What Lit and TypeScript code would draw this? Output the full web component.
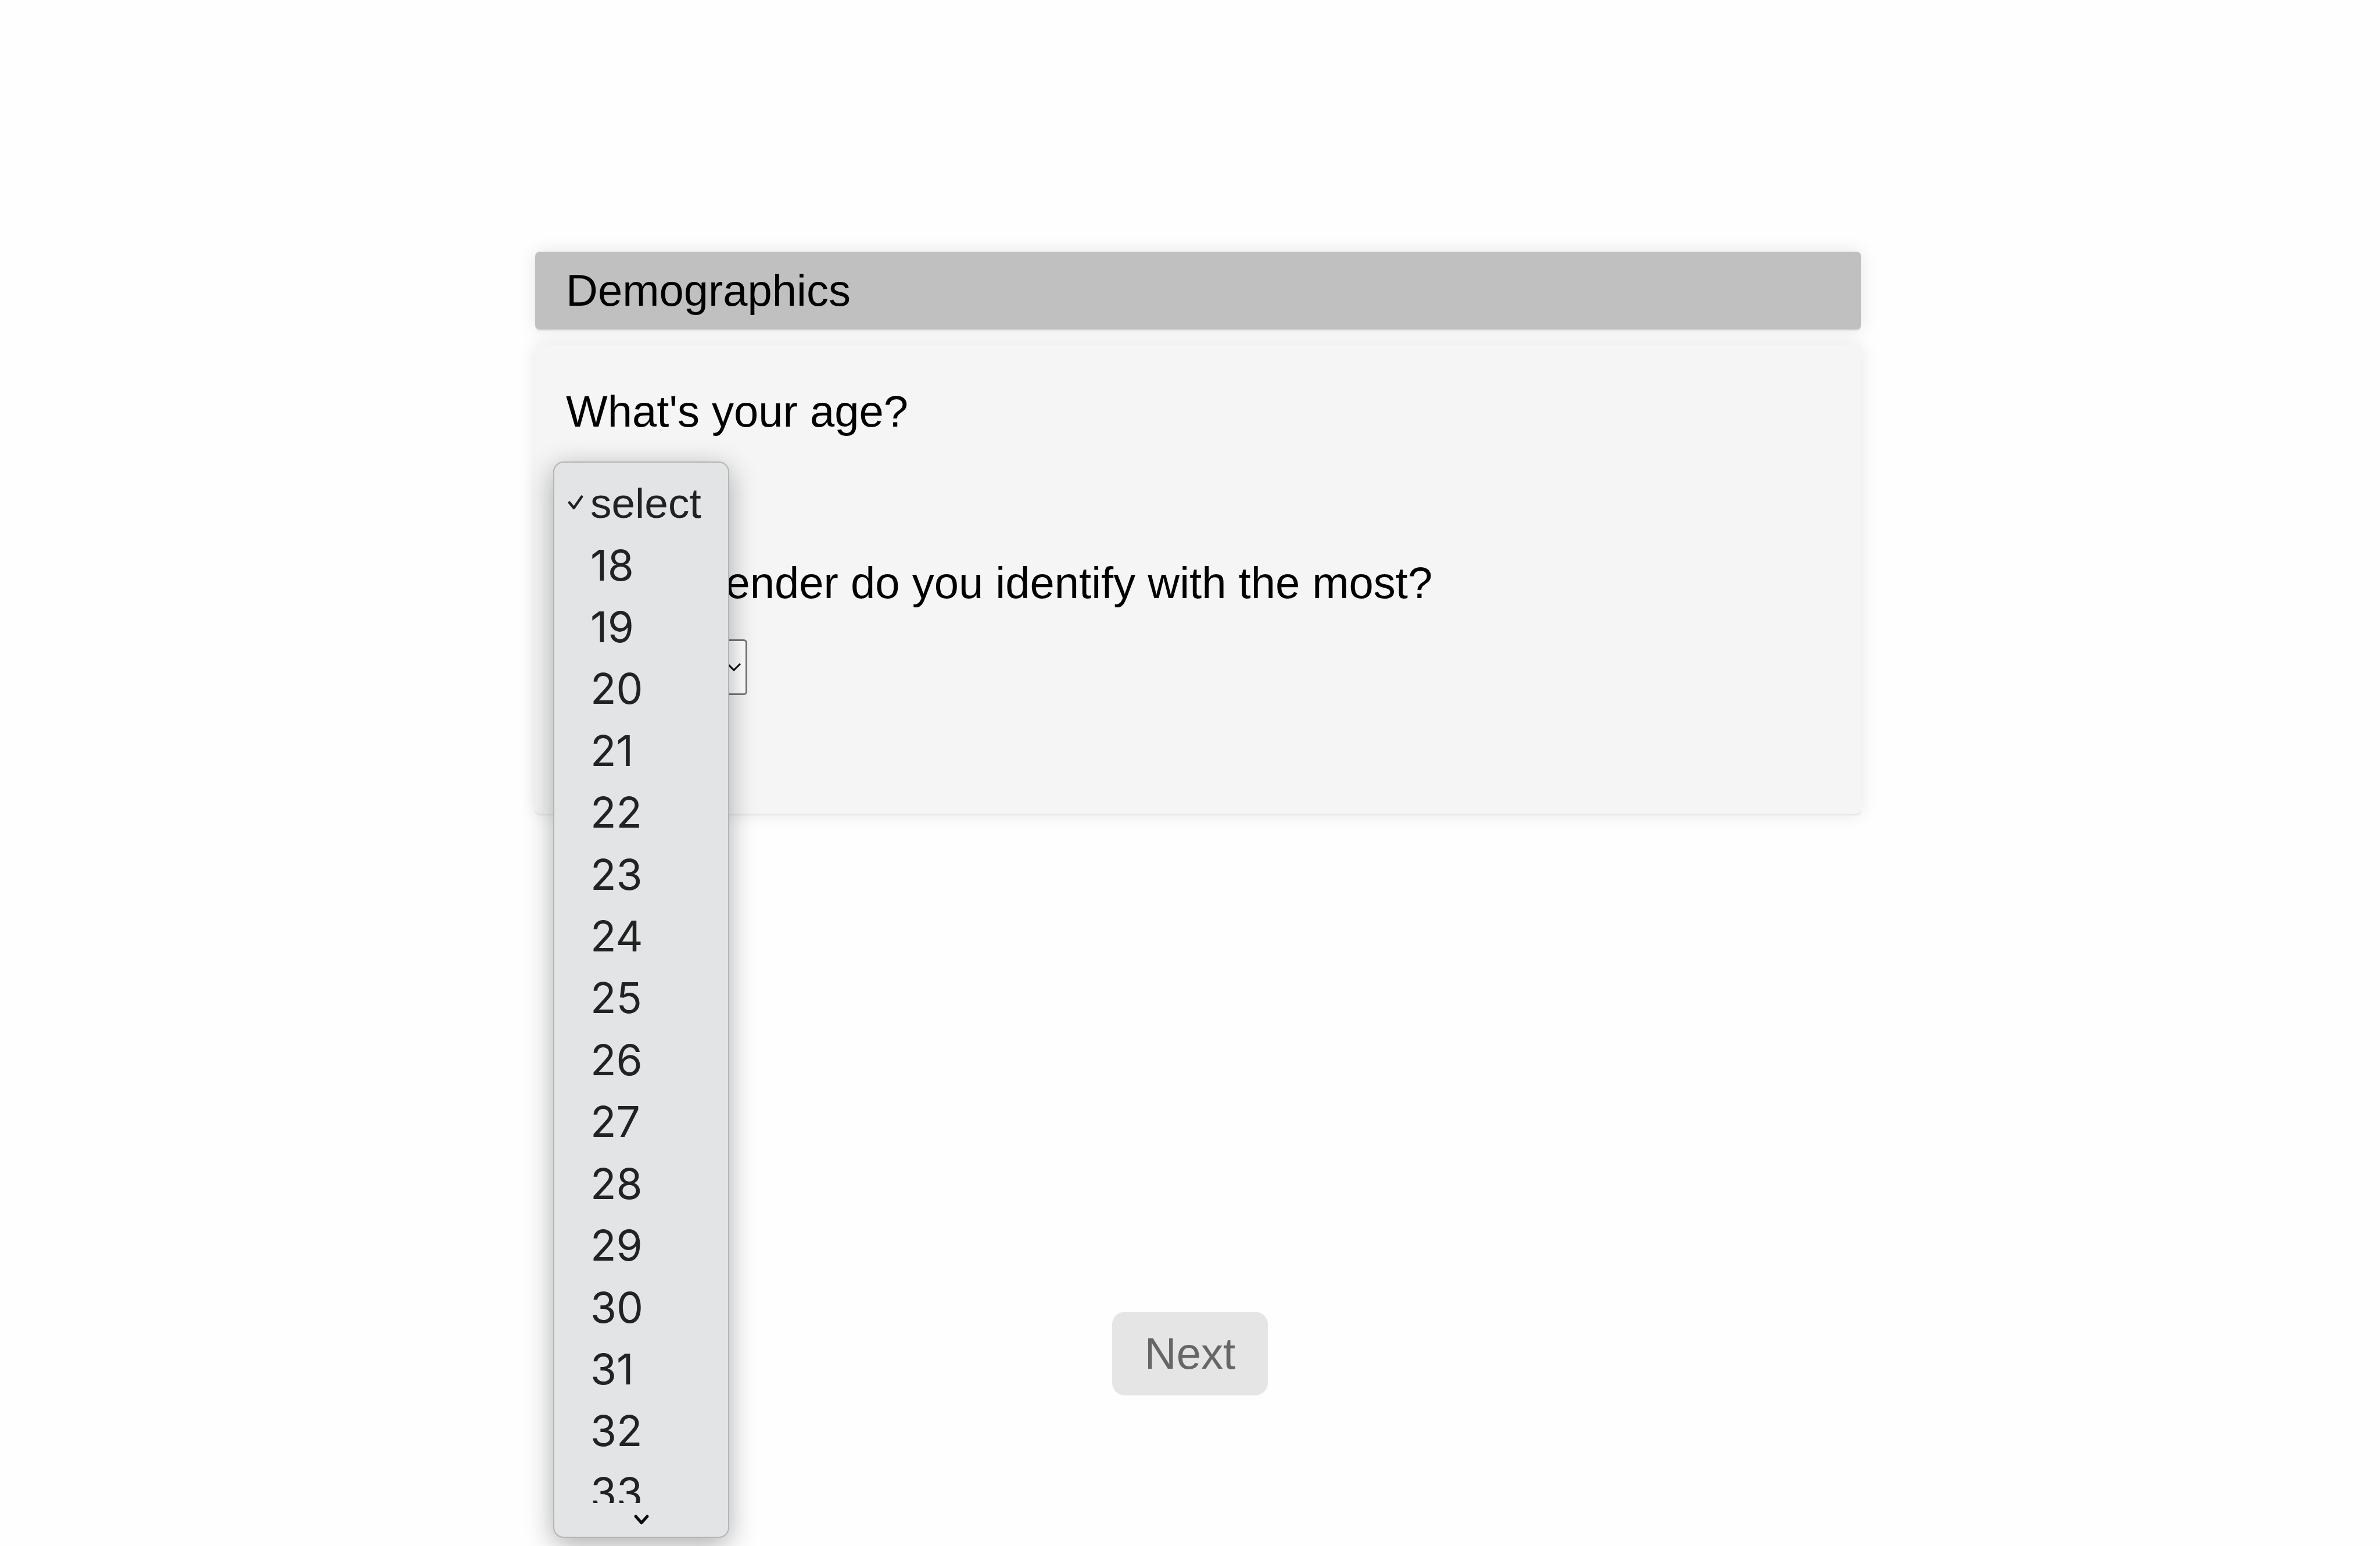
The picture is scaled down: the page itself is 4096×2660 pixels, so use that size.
import { LitElement, html, css, svg } from "lit";
import { customElement, property, state } from "lit/decorators.js";
import { classMap } from "lit/directives/class-map.js";

const PLACEHOLDER = "select";
const AGES = Array.from({ length: 16 }, (_, i) => String(18 + i));
const GENDERS = ["Woman", "Man", "Non-binary", "Other"];

@customElement("age-menu")
export class AgeMenu extends LitElement {
  @property() value = PLACEHOLDER;

  static styles = css`
    :host {
      display: block;
      box-sizing: border-box;
      width: 303px;
      padding: 17px 0 0;
      border: 2px solid #b4b5b7;
      border-radius: 18px;
      background: #e3e4e6;
      box-shadow: 0 12px 48px rgba(0, 0, 0, 0.32);
      color: #222;
      font-family: Inter, sans-serif;
      font-size: 73px;
      font-weight: 400;
    }
    .viewport {
      height: 1773px;
      overflow: hidden;
    }
    .list {
      display: grid;
      grid-auto-rows: 1fr;
      height: 1809px;
      margin: 0;
      padding: 0;
      list-style: none;
    }
    .option {
      display: grid;
      grid-template-columns: 62px 1fr;
      align-items: center;
      line-height: 88px;
    }
    .mark {
      display: block;
      width: 28px;
      height: 28px;
      margin-left: 23px;
    }
    .label {
      grid-column: 2;
    }
    .label.placeholder {
      font-family: "Liberation Sans", Arial, sans-serif;
    }
    .more {
      display: flex;
      justify-content: center;
      padding: 18px 0 20px;
    }
    .more svg {
      display: block;
      width: 28px;
      height: 20px;
    }
    .stroke {
      fill: none;
      stroke: currentColor;
      stroke-width: 4.5;
      stroke-linecap: round;
      stroke-linejoin: round;
    }
    .stroke.heavy {
      stroke: #0c0c0c;
      stroke-width: 5;
    }
  `;

  render() {
    const check = html`<svg class="mark" viewBox="0 0 28 28" aria-hidden="true">
      ${svg`<path class="stroke" d="M3 12.700 L10.700 22 L24 2.700" />`}
    </svg>`;
    return html`
      <div class="viewport">
        <ul class="list" role="listbox" aria-label="Age">
          ${[PLACEHOLDER, ...AGES].map(
            (age) => html`<li class="option" role="option" aria-selected=${age === this.value}>
              ${age === this.value ? check : ""}
              <span class=${classMap({ label: true, placeholder: age === PLACEHOLDER })}>${age}</span>
            </li>`
          )}
        </ul>
      </div>
      <div class="more">
        <svg viewBox="0 0 28 20" aria-hidden="true">
          <path class="stroke heavy" d="M4 5 L14 16 L24 5" />
        </svg>
      </div>
    `;
  }
}

@customElement("app-root")
export class AppRoot extends LitElement {
  @state() private age = PLACEHOLDER;

  static styles = css`
    :host {
      display: block;
      box-sizing: border-box;
      min-height: 100vh;
      padding: 433px 0 0;
      overflow: hidden;
      background: #fefefe;
      color: #000;
      font-family: "Liberation Sans", Arial, sans-serif;
      font-size: 76px;
      line-height: 84px;
    }
    .survey {
      display: flex;
      flex-direction: column;
      align-items: center;
    }
    .form {
      display: flex;
      flex-direction: column;
      gap: 26px;
      box-sizing: border-box;
      width: 100%;
      max-width: 2310px;
      padding-left: 28px;
    }
    .title,
    .panel {
      margin: 0;
      border-radius: 8px;
      box-shadow: 0 3px 0 #e8e8e8, 0 0 30px rgba(0, 0, 0, 0.1);
    }
    .title {
      padding: 25px 53px;
      background: #c0c0c0;
      font-size: inherit;
      font-weight: 400;
    }
    .panel {
      display: flex;
      flex-direction: column;
      gap: 60px;
      padding: 73px 31px 204px;
      background: #f5f5f5;
    }
    .question {
      display: flex;
      flex-direction: column;
      align-items: flex-start;
      gap: 55px;
    }
    .prompt {
      padding-left: 22px;
    }
    .field {
      display: grid;
      position: relative;
      width: 334px;
    }
    .field.narrow {
      width: 290px;
    }
    .select {
      grid-area: 1 / 1;
      appearance: none;
      box-sizing: border-box;
      width: 100%;
      height: 96px;
      padding: 0 48px 0 21px;
      border: 3px solid #767676;
      border-radius: 6px;
      background: #fff;
      color: #000;
      font: inherit;
    }
    .arrow {
      grid-area: 1 / 1;
      place-self: center end;
      width: 26px;
      height: 16px;
      margin-right: 10px;
      fill: none;
      stroke: #000;
      stroke-width: 3;
      pointer-events: none;
    }
    .menu {
      position: absolute;
      z-index: 1;
      top: -11px;
      left: 0;
    }
    .next {
      margin-top: 857px;
      padding: 30px 56px;
      border: 0;
      border-radius: 22px;
      background: #e5e5e5;
      color: #666;
      font: inherit;
    }
  `;

  private arrow() {
    return html`<svg class="arrow" viewBox="0 0 26 16" aria-hidden="true">
      <path d="M2 2 L13 13 L24 2" />
    </svg>`;
  }

  render() {
    return html`
      <main class="survey">
        <form class="form">
          <h1 class="title">Demographics</h1>
          <div class="panel">
            <div class="question">
              <label class="prompt" for="age">What's your age?</label>
              <div class="field narrow">
                <select class="select" id="age">
                  <option>${PLACEHOLDER}</option>
                  ${AGES.map((a) => html`<option>${a}</option>`)}
                </select>
                ${this.arrow()}
                <age-menu class="menu" .value=${this.age}></age-menu>
              </div>
            </div>
            <div class="question">
              <label class="prompt" for="gender">Which gender do you identify with the most?</label>
              <div class="field">
                <select class="select" id="gender">
                  <option>${PLACEHOLDER}</option>
                  ${GENDERS.map((g) => html`<option>${g}</option>`)}
                </select>
                ${this.arrow()}
              </div>
            </div>
          </div>
        </form>
        <button class="next" type="button" disabled>Next</button>
      </main>
    `;
  }
}
